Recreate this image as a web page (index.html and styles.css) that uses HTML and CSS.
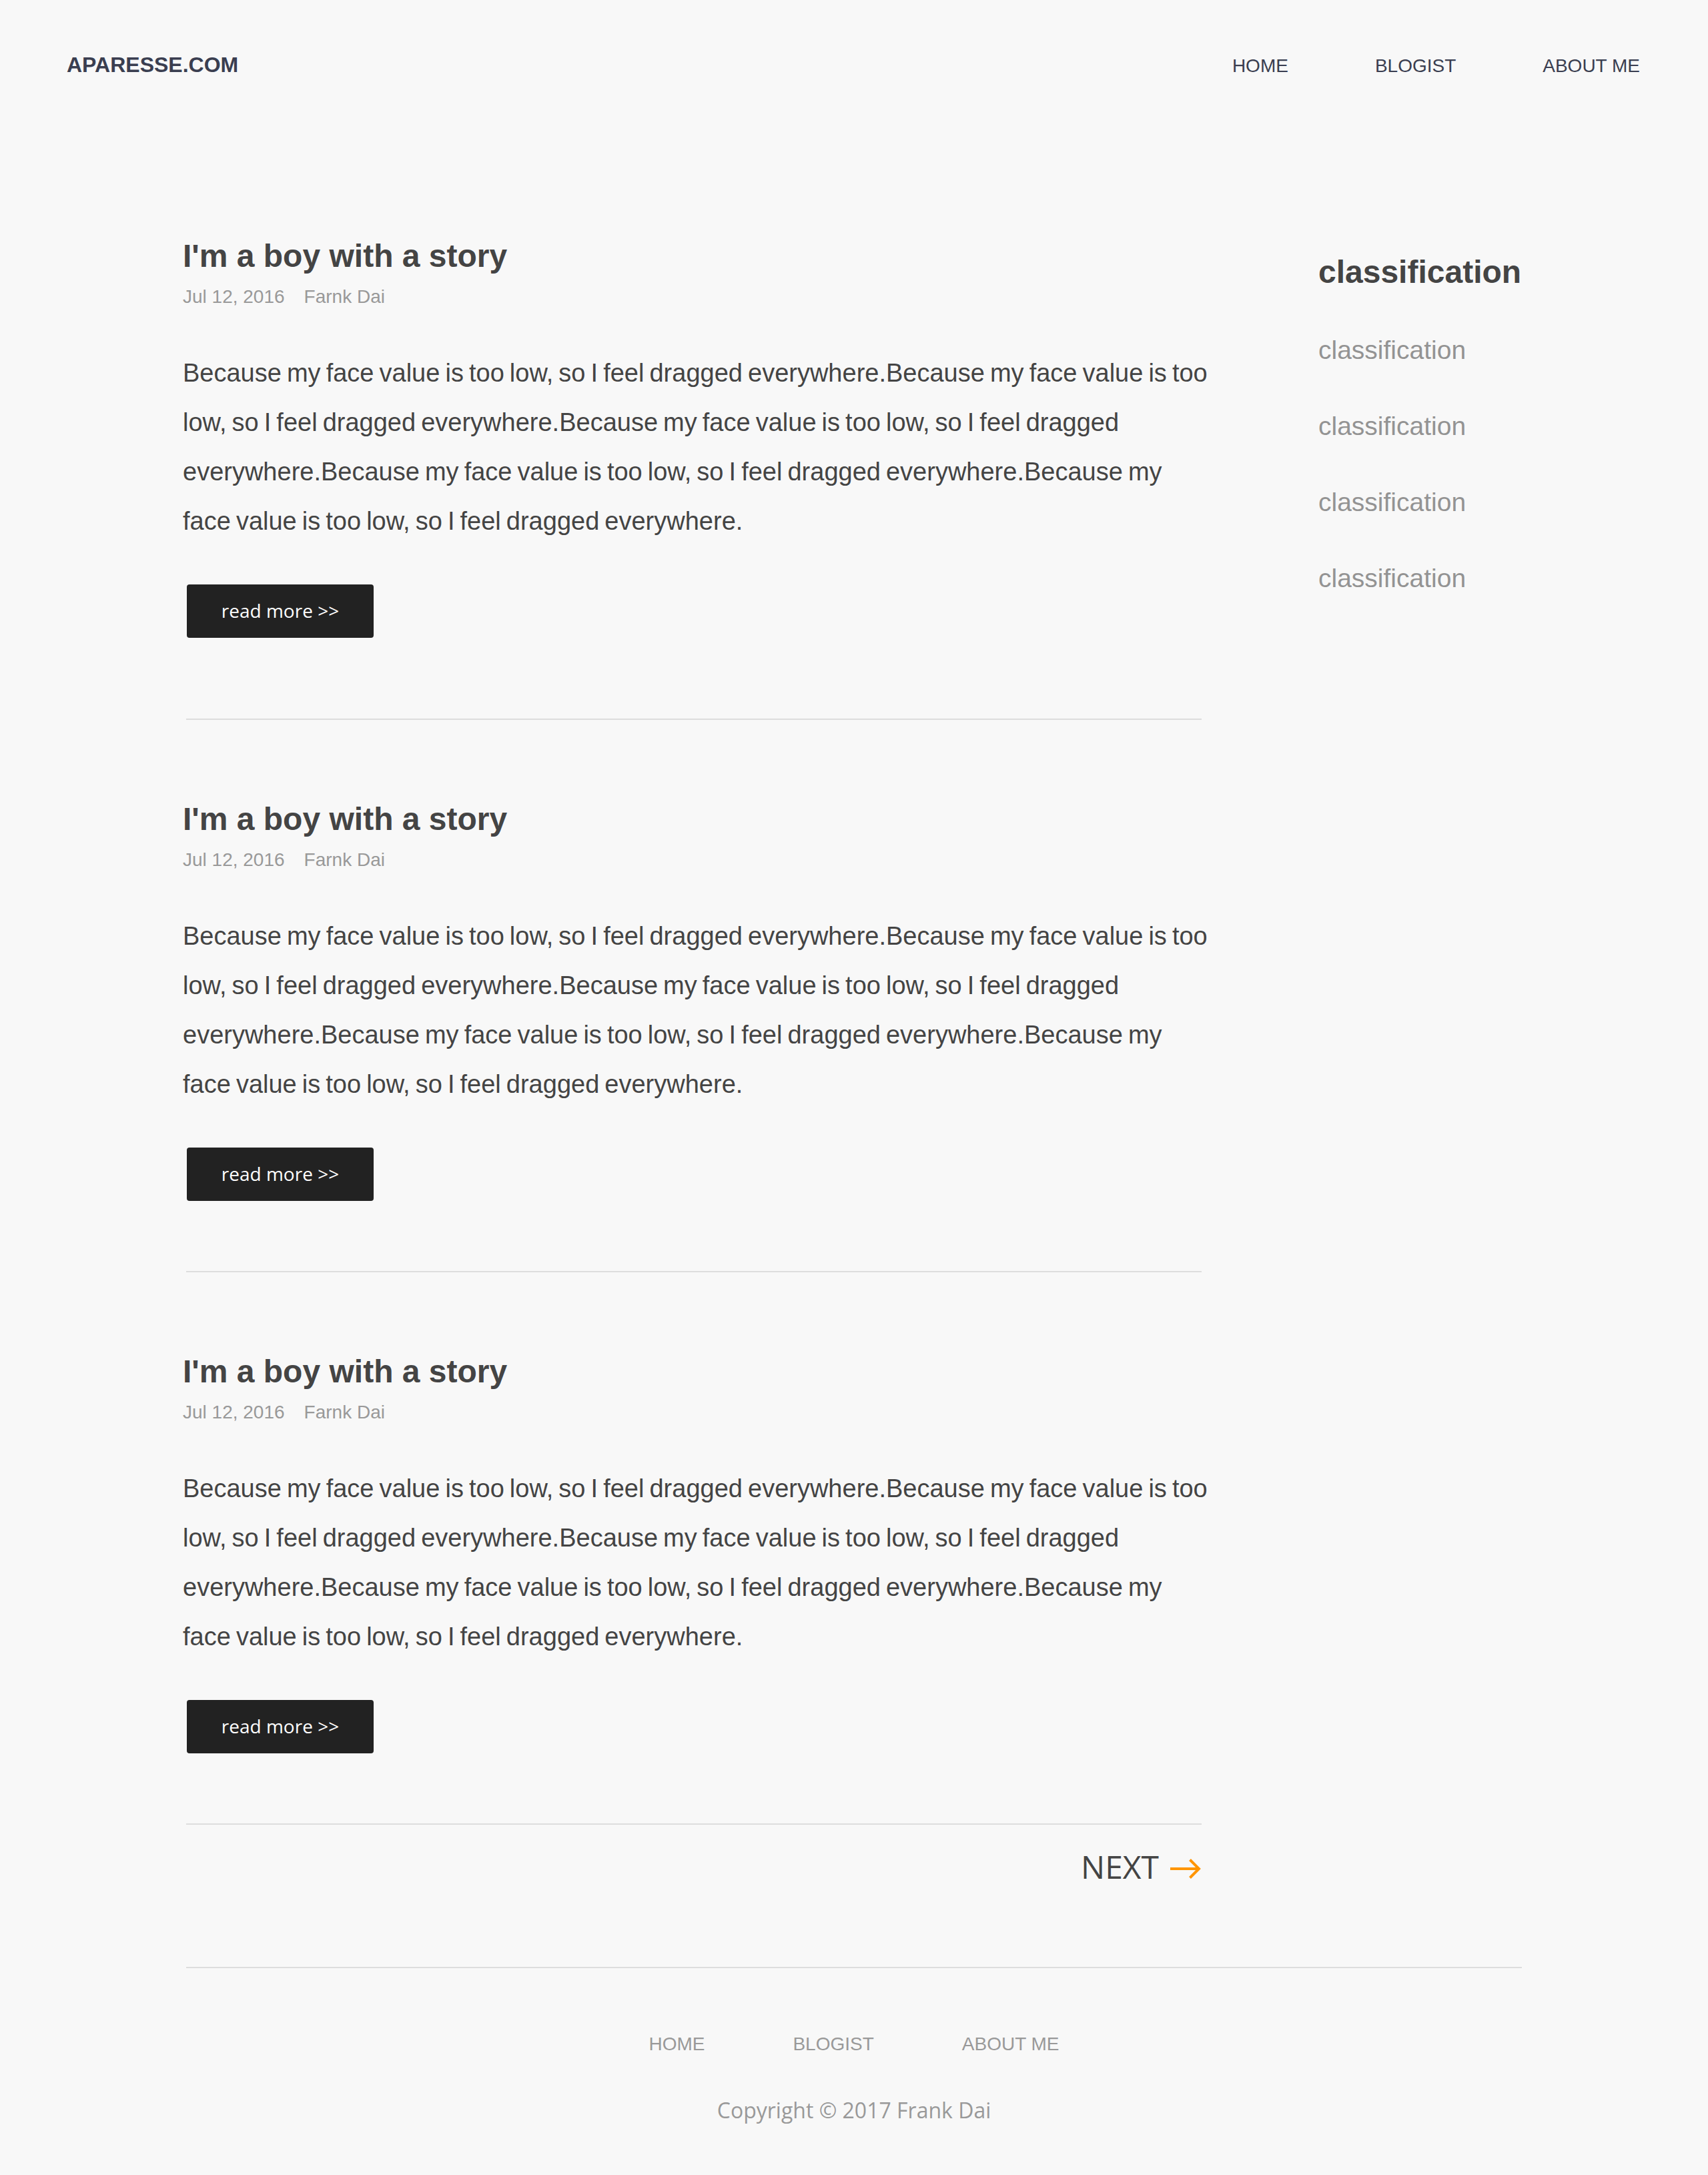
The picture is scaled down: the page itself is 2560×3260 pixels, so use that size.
FILE: index.html
```html
<!DOCTYPE html>
<html lang="en">
<head>
<meta charset="utf-8">
<title>APARESSE.COM</title>
<link rel="stylesheet" href="styles.css">
</head>
<body>
<header class="site-header">
  <a class="logo" href="#">APARESSE.COM</a>
  <nav class="top-nav">
    <a href="#">HOME</a>
    <a href="#">BLOGIST</a>
    <a href="#">ABOUT ME</a>
  </nav>
</header>

<div class="container">
  <div class="layout">
    <main class="posts">
      <article class="post">
        <h2 class="post-title">I'm a boy with a story</h2>
        <div class="post-meta"><span class="post-date">Jul 12, 2016</span><span class="post-author">Farnk Dai</span></div>
        <p class="post-excerpt">Because my face value is too low, so I feel dragged everywhere.Because my face value is too low, so I feel dragged everywhere.Because my face value is too low, so I feel dragged everywhere.Because my face value is too low, so I feel dragged everywhere.Because my face value is too low, so I feel dragged everywhere.</p>
        <a class="btn-more" href="#">read more &gt;&gt;</a>
      </article>
      <hr class="divider divider-first">
      <article class="post">
        <h2 class="post-title">I'm a boy with a story</h2>
        <div class="post-meta"><span class="post-date">Jul 12, 2016</span><span class="post-author">Farnk Dai</span></div>
        <p class="post-excerpt">Because my face value is too low, so I feel dragged everywhere.Because my face value is too low, so I feel dragged everywhere.Because my face value is too low, so I feel dragged everywhere.Because my face value is too low, so I feel dragged everywhere.Because my face value is too low, so I feel dragged everywhere.</p>
        <a class="btn-more" href="#">read more &gt;&gt;</a>
      </article>
      <hr class="divider">
      <article class="post">
        <h2 class="post-title">I'm a boy with a story</h2>
        <div class="post-meta"><span class="post-date">Jul 12, 2016</span><span class="post-author">Farnk Dai</span></div>
        <p class="post-excerpt">Because my face value is too low, so I feel dragged everywhere.Because my face value is too low, so I feel dragged everywhere.Because my face value is too low, so I feel dragged everywhere.Because my face value is too low, so I feel dragged everywhere.Because my face value is too low, so I feel dragged everywhere.</p>
        <a class="btn-more" href="#">read more &gt;&gt;</a>
      </article>
      <hr class="divider divider-last">
      <div class="pager">
        <a class="next" href="#">NEXT<svg class="next-arrow" width="48" height="32" viewBox="0 0 48 32" aria-hidden="true"><path d="M2 16H45" fill="none" stroke="#ff9500" stroke-width="4"/><path d="M31.5 2.5L45 16L31.5 29.5" fill="none" stroke="#ff9500" stroke-width="4" stroke-linejoin="miter"/></svg></a>
      </div>
    </main>

    <aside class="sidebar">
      <h3 class="sidebar-title">classification</h3>
      <ul class="category-list">
        <li><a href="#">classification</a></li>
        <li><a href="#">classification</a></li>
        <li><a href="#">classification</a></li>
        <li><a href="#">classification</a></li>
      </ul>
    </aside>
  </div>

  <footer class="site-footer">
    <nav class="footer-nav">
      <a href="#">HOME</a>
      <a href="#">BLOGIST</a>
      <a href="#">ABOUT ME</a>
    </nav>
    <p class="copyright">Copyright © 2017 Frank Dai</p>
  </footer>
</div>
</body>
</html>
```

FILE: styles.css
```css
* {
  box-sizing: border-box;
}

html, body {
  margin: 0;
  padding: 0;
  background: #f8f8f8;
}

body {
  font-family: "Liberation Sans", Arial, sans-serif;
  color: #444;
}

a {
  text-decoration: none;
  color: inherit;
}

/* Header */
.site-header {
  display: flex;
  justify-content: space-between;
  align-items: baseline;
  padding: 81px 102px 0 100px;
  height: 356px;
}

.logo {
  font-size: 32px;
  line-height: 32px;
  font-weight: bold;
  color: #3a3e50;
}

.top-nav {
  display: flex;
  gap: 130px;
}

.top-nav a {
  font-size: 28px;
  line-height: 28px;
  color: #3a3e50;
}

/* Layout */
.container {
  width: 2012px;
  margin: 0 auto;
}

.layout {
  display: flex;
  gap: 170px;
}

.posts {
  width: 1532px;
  flex: none;
}

.post-title {
  margin: 0;
  font-size: 48px;
  line-height: 56px;
  font-weight: bold;
  color: #444;
}

.post-meta {
  margin-top: 19px;
  font-size: 28px;
  line-height: 28px;
  color: #999;
}

.post-date {
  margin-right: 29px;
}

.post-excerpt {
  width: 1543px;
  margin: 63px 0 0;
  font-size: 38px;
  line-height: 74px;
  word-spacing: -2.5px;
  color: #444;
}

.btn-more {
  display: block;
  width: 280px;
  height: 80px;
  margin: 58px 0 0 6px;
  background: #222;
  border-radius: 4px;
  color: #fff;
  font-family: "Open Sans", sans-serif;
  font-size: 28px;
  line-height: 78px;
  text-align: center;
}

.divider {
  height: 2px;
  margin: 105px 5px 121px;
  border: 0;
  background: #ddd;
}

.divider-first {
  margin-top: 121px;
}

.divider-last {
  margin-bottom: 0;
}

.pager {
  display: flex;
  justify-content: flex-end;
  padding: 39px 6px 0 0;
}

.next {
  display: flex;
  align-items: center;
  font-family: "Open Sans", sans-serif;
  font-size: 48px;
  line-height: 48px;
  color: #444;
}

.next-arrow {
  display: block;
  margin-left: 15px;
  margin-top: 6px;
}

/* Sidebar */
.sidebar {
  width: 310px;
  flex: none;
  padding-top: 24px;
}

.sidebar-title {
  margin: 0;
  font-size: 48px;
  line-height: 56px;
  font-weight: bold;
  color: #444;
}

.category-list {
  list-style: none;
  margin: 69px 0 0;
  padding: 0;
}

.category-list li {
  font-size: 39px;
  line-height: 39px;
  color: #939393;
}

.category-list li + li {
  margin-top: 75px;
}

/* Footer */
.site-footer {
  margin: 126px 5px 0;
  border-top: 2px solid #ddd;
  padding: 100px 0 81px;
  text-align: center;
}

.footer-nav {
  display: flex;
  justify-content: center;
  gap: 132px;
}

.footer-nav a {
  font-size: 28px;
  line-height: 28px;
  color: #999;
}

.copyright {
  margin: 69px 0 0;
  font-family: "Open Sans", sans-serif;
  font-size: 32px;
  line-height: 32px;
  color: #999;
}
```
